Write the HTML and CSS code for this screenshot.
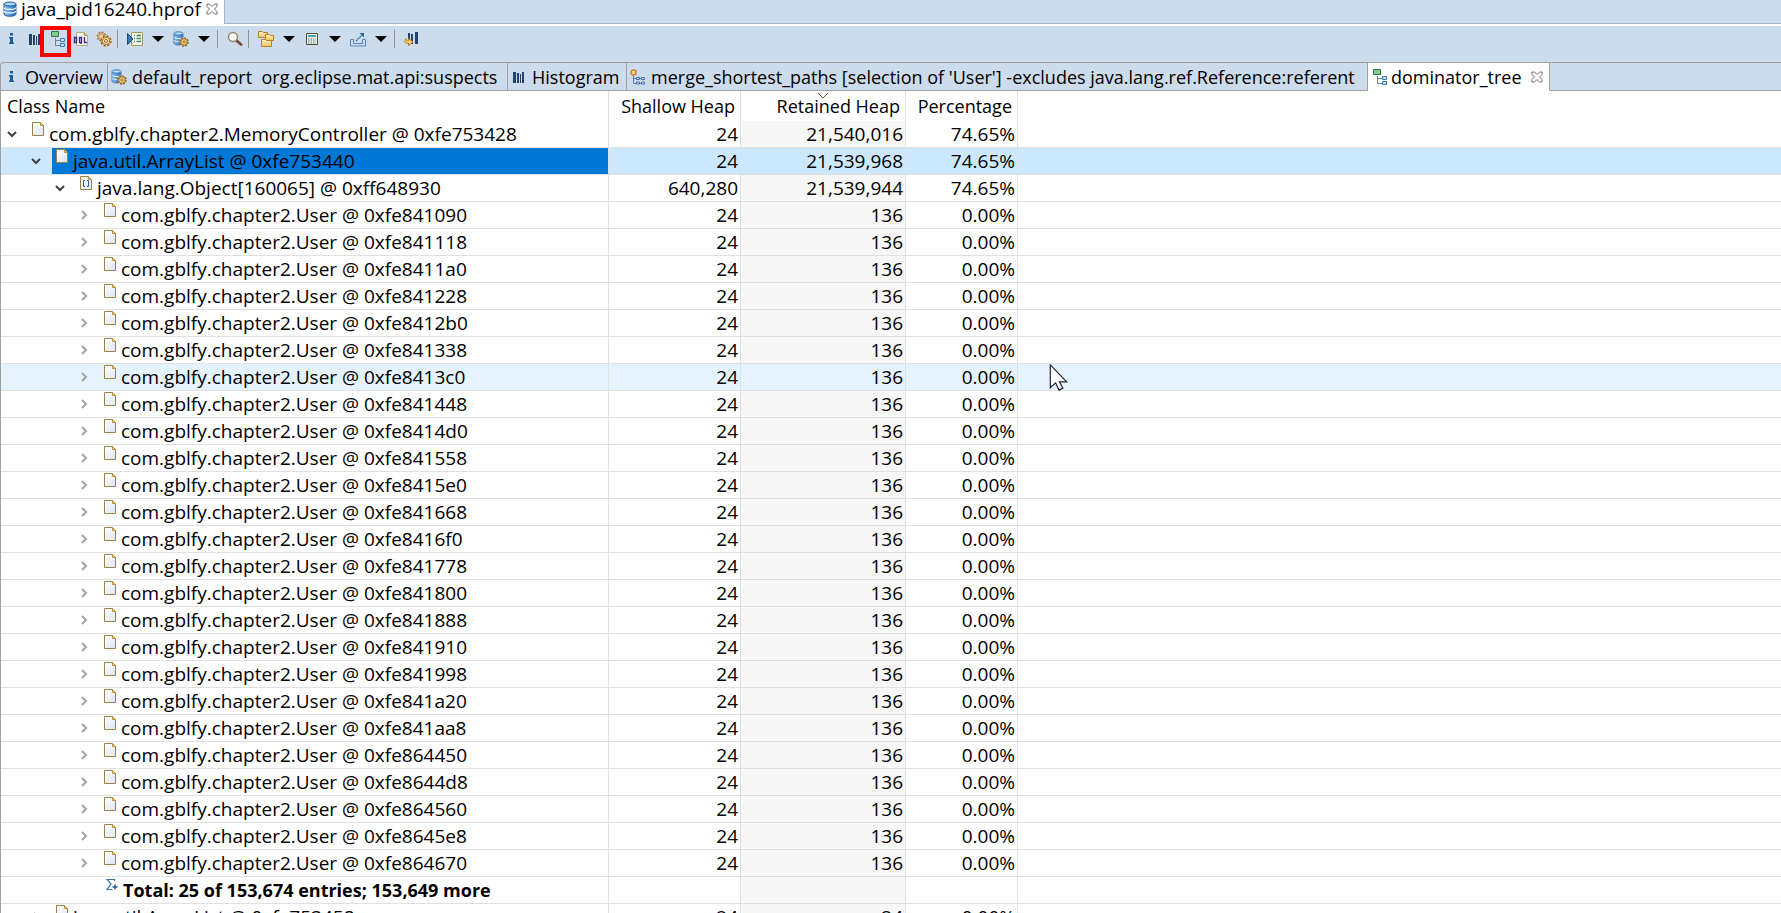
FILE: index.html
```html
<!DOCTYPE html>
<html lang="en">
<head>
<meta charset="utf-8">
<title>java_pid16240.hprof</title>
<link rel="stylesheet" href="styles.css">
</head>
<body>
<svg class="defs" aria-hidden="true">
  <defs>
    <linearGradient id="paper" x1="0" y1="0" x2="1" y2="1"><stop offset="0" stop-color="#fff"/><stop offset="1" stop-color="#dce6f5"/></linearGradient>
    <linearGradient id="cyl" x1="0" y1="0" x2="1" y2="0"><stop offset="0" stop-color="#8ec4f0"/><stop offset="1" stop-color="#2b6fb5"/></linearGradient>
    <linearGradient id="gold" x1="0" y1="0" x2="0" y2="1"><stop offset="0" stop-color="#fff3c4"/><stop offset="1" stop-color="#efc25c"/></linearGradient>
  </defs>
  <symbol id="i-info" viewBox="0 0 16 16"><path fill="#1c5f9e" d="M6 2h3v2.500H6zM5 6h4v5.500h1V13H5v-1.500h1v-4H5z"/></symbol>
  <symbol id="i-hist" viewBox="0 0 16 16"><path fill="#23406f" d="M2 3h3v11H2zM6 4h2v10H6zM9 5h1v9H9zM11 3h2v11h-2z"/></symbol>
  <symbol id="i-tree" viewBox="0 0 16 16"><path d="M5.500 7v7.500H10M5.500 9.500H10" fill="none" stroke="#6b7fa3"/><path d="M1.500.5h7v5h-7z" fill="#8cc98e" stroke="#237a3c"/><path d="M10.500 7.500h4v3h-4zM10.500 12.500h4v3h-4z" fill="#c4e2fa" stroke="#3b77b5"/></symbol>
  <symbol id="i-oql" viewBox="0 0 16 16"><path d="M3.500 1.500h8l3 3v10h-11z" fill="#f7f7f2" stroke="#b5ab86"/><path d="M11.500 1.500v3h3" fill="#e8c878" stroke="#b5944c"/><path d="M1.500 6.500h2v5h-2zM6.500 6.500h2v5h-2zM8 11v2M11.500 6v5.500H14" fill="none" stroke="#3d2f7a" stroke-width="1.400"/></symbol>
  <symbol id="i-gears" viewBox="0 0 16 16"><circle cx="5.500" cy="5.500" r="4.200" fill="#e9d0a8" stroke="#a8763a" stroke-width="1.500" stroke-dasharray="2 1.200"/><circle cx="5.500" cy="5.500" r="2.800" fill="none" stroke="#b98b52"/><circle cx="10" cy="10" r="4.900" fill="#f4d896" stroke="#946024" stroke-width="1.500" stroke-dasharray="2.300 1.500"/><circle cx="10" cy="10" r="3.600" fill="#fbe5a6" stroke="#a87430"/><circle cx="10" cy="10" r="1.500" fill="#fff" stroke="#946024"/></symbol>
  <symbol id="i-run" viewBox="0 0 16 16"><path d="M4.500 1.500h11v13h-11z" fill="#f5f9ee" stroke="#a39a5c"/><path d="M7 4.500h1M9.500 4.500H14M7 7.500h1M9.500 7.500H14M7 10.500h1M9.500 10.500H14" stroke="#3c8a68" stroke-width="1.300"/><path d="M.5 2.500 6 8l-5.500 5.500z" fill="#3878a8" stroke="#174d76"/></symbol>
  <symbol id="i-db" viewBox="0 0 16 16"><path d="M2 3v10c0 3 12 3 12 0V3z" fill="url(#cyl)" stroke="#1f5c9e"/><path d="M2 6.500c0 2.500 12 2.500 12 0M2 10c0 2.500 12 2.500 12 0" fill="none" stroke="#fff" stroke-width="1.200"/><ellipse cx="8" cy="3" rx="6" ry="2" fill="#a9d4f7" stroke="#1f5c9e"/></symbol>
  <symbol id="i-dbgear" viewBox="0 0 16 16"><path d="M1 3v9c0 2.500 9 2.500 9 0V3z" fill="url(#cyl)" stroke="#3a78b5"/><path d="M1 6c0 2 9 2 9 0M1 9c0 2 9 2 9 0" fill="none" stroke="#e8f4ff"/><ellipse cx="5.500" cy="2.500" rx="4.500" ry="1.700" fill="#b5daf8" stroke="#3a78b5"/><circle cx="11" cy="11" r="4" fill="#fbdf8a" stroke="#8d6220" stroke-width="1.600" stroke-dasharray="1.900 1.200"/><circle cx="11" cy="11" r="3.200" fill="#fbe49a" stroke="#9c702c"/><circle cx="11" cy="11" r="1.200" fill="#fff" stroke="#8d6220"/></symbol>
  <symbol id="i-search" viewBox="0 0 16 16"><path d="m9.500 9.500 4.500 4" stroke="#7c4b47" stroke-width="3" stroke-linecap="round"/><circle cx="6" cy="6" r="4.500" fill="#f7fbff" stroke="#8f8a68" stroke-width="1.500"/></symbol>
  <symbol id="i-folders" viewBox="0 0 16 16"><g fill="url(#gold)" stroke="#b98424"><path d="M.5.5h4l1 1h4v5h-9z"/><path d="M7.500 3.500h4l1 1h3v5h-8z"/><path d="M3.500 8.500h4l1 1h5v6h-10z"/></g></symbol>
  <symbol id="i-calc" viewBox="0 0 16 16"><path d="M2.500 2.500h11v11h-11z" fill="#f5f3df" stroke="#4a4d44"/><path d="M4 4h8v2H4z" fill="#4d9bbd"/><path d="M4 8h8M4 10h8M4 12h8" stroke="#3f7ea3" stroke-width="1.200" stroke-dasharray="1.500 1"/></symbol>
  <symbol id="i-export" viewBox="0 0 16 16"><path d="M.5 8.500h3v4h9v-4h3v6.500H.5z" fill="#c8dcf2" stroke="#6483b5"/><path d="m6 10 6.500-6.500" stroke="#2b67a3" stroke-width="1.200" stroke-dasharray="2 .5"/><path d="M9.500 2H14v4.500z" fill="#2b67a3"/></symbol>
  <symbol id="i-histgo" viewBox="0 0 16 16"><path fill="#23406f" d="M4 2h2v9H4zM7 3h2v10H7zM11 1h3v12h-3z"/><path d="M2 7.500c-2.500 3-1 5 2.500 4.500v2.500L9 11 4.500 7.500v2C3 10 2 9 2 7.500z" fill="#fbd66e" stroke="#ad761c"/></symbol>
  <symbol id="i-paths" viewBox="0 0 16 16"><path d="M3.500 6v8.500H7M3.500 9.500H7M10 9.500h2M10 14.500h2" fill="none" stroke="#5b7cb0"/><circle cx="3.500" cy="3.500" r="2.600" fill="#fbd08a" stroke="#c9771f" stroke-width="1.300"/><path d="M6.500 8.500h3v2h-3zM11.500 8.500h3v2h-3zM6.500 13h3v2h-3zM11.500 13h3v2h-3z" fill="#d6e4f8" stroke="#4b71ad"/></symbol>
  <symbol id="i-close" viewBox="0 0 12 12"><path d="M1 1h2.500L6 3.500 8.500 1H11v2.500L8.500 6 11 8.500V11H8.500L6 8.500 3.500 11H1V8.500L3.500 6 1 3.500z" fill="#fff" stroke="#6d6d6d"/></symbol>
  <symbol id="i-down" viewBox="0 0 12 6"><path d="M0 0h12L6 6z"/></symbol>
  <symbol id="i-file" viewBox="0 0 12 14"><path d="M.5.5h8l3 3v10H.5z" fill="url(#paper)" stroke="#9c8240"/><path d="M8.500.5v3h3z" fill="#f0d595" stroke="#b8923e"/></symbol>
  <symbol id="i-array" viewBox="0 0 12 14"><path d="M.5.5h8l3 3v10H.5z" fill="url(#paper)" stroke="#9c8240"/><path d="M8.500.5v3h3z" fill="#f0d595" stroke="#b8923e"/><path d="M5 4.500H3.500v6H5M7 4.500h1.500v6H7" fill="none" stroke="#2b5c94"/></symbol>
  <symbol id="i-sum" viewBox="0 0 12 14"><path d="M8.500 3V1.500H1L5 6 1 11.500h5.500" fill="none" stroke="#3d6fa3" stroke-width="1.200"/><path d="M9 6.500v5M6.500 9h5" stroke="#2f6196" stroke-width="1.500"/></symbol>
  <symbol id="i-open" viewBox="0 0 10 10"><path d="m1 3 4 4 4-4" fill="none" stroke="#404040" stroke-width="2"/></symbol>
  <symbol id="i-shut" viewBox="0 0 10 10"><path d="m3 1 4 4-4 4" fill="none" stroke="#a3a3a3" stroke-width="2"/></symbol>
</svg>

<header class="titlebar">
  <div class="file-tab"><svg class="ico"><use href="#i-db"/></svg><span>java_pid16240.hprof</span><button class="close" aria-label="Close file"><svg><use href="#i-close"/></svg></button></div>
</header>

<div class="toolbar" role="toolbar" aria-label="Heap dump tools">
  <button aria-label="Overview"><svg class="ico"><use href="#i-info"/></svg></button>
  <button aria-label="Histogram"><svg class="ico"><use href="#i-hist"/></svg></button>
  <button class="marked" aria-label="Dominator tree"><svg class="ico"><use href="#i-tree"/></svg></button>
  <button aria-label="Object query"><svg class="ico"><use href="#i-oql"/></svg></button>
  <button aria-label="Thread overview"><svg class="ico"><use href="#i-gears"/></svg></button>
  <i class="sep"></i>
  <button aria-label="Run report"><svg class="ico"><use href="#i-run"/></svg></button>
  <button aria-label="Report menu"><svg class="down"><use href="#i-down"/></svg></button>
  <button aria-label="Query browser"><svg class="ico"><use href="#i-dbgear"/></svg></button>
  <button aria-label="Query menu"><svg class="down"><use href="#i-down"/></svg></button>
  <i class="sep"></i>
  <button aria-label="Search"><svg class="ico"><use href="#i-search"/></svg></button>
  <i class="sep"></i>
  <button aria-label="Group"><svg class="ico"><use href="#i-folders"/></svg></button>
  <button aria-label="Group menu"><svg class="down"><use href="#i-down"/></svg></button>
  <button aria-label="Calculate"><svg class="ico"><use href="#i-calc"/></svg></button>
  <button aria-label="Calculate menu"><svg class="down"><use href="#i-down"/></svg></button>
  <button aria-label="Export"><svg class="ico"><use href="#i-export"/></svg></button>
  <button aria-label="Export menu"><svg class="down"><use href="#i-down"/></svg></button>
  <i class="sep"></i>
  <button aria-label="Compare"><svg class="ico"><use href="#i-histgo"/></svg></button>
</div>

<nav class="tabs" role="tablist">
  <button class="tab t-overview" role="tab"><svg class="ico"><use href="#i-info"/></svg><span>Overview</span></button>
  <button class="tab t-report" role="tab"><svg class="ico"><use href="#i-dbgear"/></svg><span>default_report&nbsp; org.eclipse.mat.api:suspects</span></button>
  <button class="tab t-hist" role="tab"><svg class="ico"><use href="#i-hist"/></svg><span>Histogram</span></button>
  <button class="tab t-paths" role="tab"><svg class="ico"><use href="#i-paths"/></svg><span>merge_shortest_paths [selection of 'User'] -excludes java.lang.ref.Reference:referent</span></button>
  <div class="tab active" role="tab" aria-selected="true"><svg class="ico"><use href="#i-tree"/></svg><span>dominator_tree</span><button class="close" aria-label="Close tab"><svg><use href="#i-close"/></svg></button></div>
</nav>

<main class="view">
<table class="heap">
<colgroup><col class="c-name"><col class="c-shallow"><col class="c-retained"><col class="c-percent"><col></colgroup>
<thead><tr><th>Class Name</th><th>Shallow Heap</th><th class="sorted">Retained Heap<svg class="sort" viewBox="0 0 12 6"><path d="m1 0 5 5 5-5" fill="none" stroke="#555"/></svg></th><th>Percentage</th><th></th></tr></thead>
<tbody>
<tr><td><div class="node l0"><button aria-label="Collapse"><svg><use href="#i-open"/></svg></button><span class="label"><svg><use href="#i-file"/></svg>com.gblfy.chapter2.MemoryController @ 0xfe753428</span></div></td><td>24</td><td>21,540,016</td><td>74.65%</td><td></td></tr>
<tr class="selected"><td><div class="node l1"><button aria-label="Collapse"><svg><use href="#i-open"/></svg></button><span class="label"><svg><use href="#i-file"/></svg>java.util.ArrayList @ 0xfe753440</span></div></td><td>24</td><td>21,539,968</td><td>74.65%</td><td></td></tr>
<tr><td><div class="node l2"><button aria-label="Collapse"><svg><use href="#i-open"/></svg></button><span class="label"><svg><use href="#i-array"/></svg>java.lang.Object[160065] @ 0xff648930</span></div></td><td>640,280</td><td>21,539,944</td><td>74.65%</td><td></td></tr>
<tr><td><div class="node l3"><button aria-label="Expand"><svg><use href="#i-shut"/></svg></button><span class="label"><svg><use href="#i-file"/></svg>com.gblfy.chapter2.User @ 0xfe841090</span></div></td><td>24</td><td>136</td><td>0.00%</td><td></td></tr>
<tr><td><div class="node l3"><button aria-label="Expand"><svg><use href="#i-shut"/></svg></button><span class="label"><svg><use href="#i-file"/></svg>com.gblfy.chapter2.User @ 0xfe841118</span></div></td><td>24</td><td>136</td><td>0.00%</td><td></td></tr>
<tr><td><div class="node l3"><button aria-label="Expand"><svg><use href="#i-shut"/></svg></button><span class="label"><svg><use href="#i-file"/></svg>com.gblfy.chapter2.User @ 0xfe8411a0</span></div></td><td>24</td><td>136</td><td>0.00%</td><td></td></tr>
<tr><td><div class="node l3"><button aria-label="Expand"><svg><use href="#i-shut"/></svg></button><span class="label"><svg><use href="#i-file"/></svg>com.gblfy.chapter2.User @ 0xfe841228</span></div></td><td>24</td><td>136</td><td>0.00%</td><td></td></tr>
<tr><td><div class="node l3"><button aria-label="Expand"><svg><use href="#i-shut"/></svg></button><span class="label"><svg><use href="#i-file"/></svg>com.gblfy.chapter2.User @ 0xfe8412b0</span></div></td><td>24</td><td>136</td><td>0.00%</td><td></td></tr>
<tr><td><div class="node l3"><button aria-label="Expand"><svg><use href="#i-shut"/></svg></button><span class="label"><svg><use href="#i-file"/></svg>com.gblfy.chapter2.User @ 0xfe841338</span></div></td><td>24</td><td>136</td><td>0.00%</td><td></td></tr>
<tr class="hovered"><td><div class="node l3"><button aria-label="Expand"><svg><use href="#i-shut"/></svg></button><span class="label"><svg><use href="#i-file"/></svg>com.gblfy.chapter2.User @ 0xfe8413c0</span></div></td><td>24</td><td>136</td><td>0.00%</td><td class="rest"><svg class="pointer" viewBox="0 0 20 30"><path d="M1 1v23.500l5.500-5L10 27l4-2-3.500-6.500H18z" fill="#fff" stroke="#1c1c2c" stroke-width="1.200"/></svg></td></tr>
<tr><td><div class="node l3"><button aria-label="Expand"><svg><use href="#i-shut"/></svg></button><span class="label"><svg><use href="#i-file"/></svg>com.gblfy.chapter2.User @ 0xfe841448</span></div></td><td>24</td><td>136</td><td>0.00%</td><td></td></tr>
<tr><td><div class="node l3"><button aria-label="Expand"><svg><use href="#i-shut"/></svg></button><span class="label"><svg><use href="#i-file"/></svg>com.gblfy.chapter2.User @ 0xfe8414d0</span></div></td><td>24</td><td>136</td><td>0.00%</td><td></td></tr>
<tr><td><div class="node l3"><button aria-label="Expand"><svg><use href="#i-shut"/></svg></button><span class="label"><svg><use href="#i-file"/></svg>com.gblfy.chapter2.User @ 0xfe841558</span></div></td><td>24</td><td>136</td><td>0.00%</td><td></td></tr>
<tr><td><div class="node l3"><button aria-label="Expand"><svg><use href="#i-shut"/></svg></button><span class="label"><svg><use href="#i-file"/></svg>com.gblfy.chapter2.User @ 0xfe8415e0</span></div></td><td>24</td><td>136</td><td>0.00%</td><td></td></tr>
<tr><td><div class="node l3"><button aria-label="Expand"><svg><use href="#i-shut"/></svg></button><span class="label"><svg><use href="#i-file"/></svg>com.gblfy.chapter2.User @ 0xfe841668</span></div></td><td>24</td><td>136</td><td>0.00%</td><td></td></tr>
<tr><td><div class="node l3"><button aria-label="Expand"><svg><use href="#i-shut"/></svg></button><span class="label"><svg><use href="#i-file"/></svg>com.gblfy.chapter2.User @ 0xfe8416f0</span></div></td><td>24</td><td>136</td><td>0.00%</td><td></td></tr>
<tr><td><div class="node l3"><button aria-label="Expand"><svg><use href="#i-shut"/></svg></button><span class="label"><svg><use href="#i-file"/></svg>com.gblfy.chapter2.User @ 0xfe841778</span></div></td><td>24</td><td>136</td><td>0.00%</td><td></td></tr>
<tr><td><div class="node l3"><button aria-label="Expand"><svg><use href="#i-shut"/></svg></button><span class="label"><svg><use href="#i-file"/></svg>com.gblfy.chapter2.User @ 0xfe841800</span></div></td><td>24</td><td>136</td><td>0.00%</td><td></td></tr>
<tr><td><div class="node l3"><button aria-label="Expand"><svg><use href="#i-shut"/></svg></button><span class="label"><svg><use href="#i-file"/></svg>com.gblfy.chapter2.User @ 0xfe841888</span></div></td><td>24</td><td>136</td><td>0.00%</td><td></td></tr>
<tr><td><div class="node l3"><button aria-label="Expand"><svg><use href="#i-shut"/></svg></button><span class="label"><svg><use href="#i-file"/></svg>com.gblfy.chapter2.User @ 0xfe841910</span></div></td><td>24</td><td>136</td><td>0.00%</td><td></td></tr>
<tr><td><div class="node l3"><button aria-label="Expand"><svg><use href="#i-shut"/></svg></button><span class="label"><svg><use href="#i-file"/></svg>com.gblfy.chapter2.User @ 0xfe841998</span></div></td><td>24</td><td>136</td><td>0.00%</td><td></td></tr>
<tr><td><div class="node l3"><button aria-label="Expand"><svg><use href="#i-shut"/></svg></button><span class="label"><svg><use href="#i-file"/></svg>com.gblfy.chapter2.User @ 0xfe841a20</span></div></td><td>24</td><td>136</td><td>0.00%</td><td></td></tr>
<tr><td><div class="node l3"><button aria-label="Expand"><svg><use href="#i-shut"/></svg></button><span class="label"><svg><use href="#i-file"/></svg>com.gblfy.chapter2.User @ 0xfe841aa8</span></div></td><td>24</td><td>136</td><td>0.00%</td><td></td></tr>
<tr><td><div class="node l3"><button aria-label="Expand"><svg><use href="#i-shut"/></svg></button><span class="label"><svg><use href="#i-file"/></svg>com.gblfy.chapter2.User @ 0xfe864450</span></div></td><td>24</td><td>136</td><td>0.00%</td><td></td></tr>
<tr><td><div class="node l3"><button aria-label="Expand"><svg><use href="#i-shut"/></svg></button><span class="label"><svg><use href="#i-file"/></svg>com.gblfy.chapter2.User @ 0xfe8644d8</span></div></td><td>24</td><td>136</td><td>0.00%</td><td></td></tr>
<tr><td><div class="node l3"><button aria-label="Expand"><svg><use href="#i-shut"/></svg></button><span class="label"><svg><use href="#i-file"/></svg>com.gblfy.chapter2.User @ 0xfe864560</span></div></td><td>24</td><td>136</td><td>0.00%</td><td></td></tr>
<tr><td><div class="node l3"><button aria-label="Expand"><svg><use href="#i-shut"/></svg></button><span class="label"><svg><use href="#i-file"/></svg>com.gblfy.chapter2.User @ 0xfe8645e8</span></div></td><td>24</td><td>136</td><td>0.00%</td><td></td></tr>
<tr><td><div class="node l3"><button aria-label="Expand"><svg><use href="#i-shut"/></svg></button><span class="label"><svg><use href="#i-file"/></svg>com.gblfy.chapter2.User @ 0xfe864670</span></div></td><td>24</td><td>136</td><td>0.00%</td><td></td></tr>
<tr class="total"><td><div class="node leaf"><span class="label"><svg><use href="#i-sum"/></svg>Total: 25 of 153,674 entries; 153,649 more</span></div></td><td></td><td></td><td></td><td></td></tr>
<tr><td><div class="node l1"><button aria-label="Expand"><svg><use href="#i-shut"/></svg></button><span class="label"><svg><use href="#i-file"/></svg>java.util.ArrayList @ 0xfe753458</span></div></td><td>24</td><td>24</td><td>0.00%</td><td></td></tr>
</tbody>
</table>
</main>
</body>
</html>
```

FILE: styles.css
```css
* { box-sizing: border-box; }

body {
  margin: 0;
  height: 100vh;
  overflow: hidden;
  display: flex;
  flex-direction: column;
  background: #cddcec;
  color: #000;
  font: 19px/26px "Open Sans", "Noto Sans", sans-serif;
}

button {
  margin: 0;
  padding: 0;
  border: 0;
  background: none;
  color: inherit;
  font: inherit;
}

svg { display: block; flex: none; }
.defs { position: absolute; width: 0; height: 0; }
.ico { width: 16px; height: 16px; }

.close { display: flex; }
.close svg { width: 12px; height: 12px; }

/* Editor title */
.titlebar {
  flex: none;
  display: flex;
  height: 26px;
  border-bottom: 2px solid #fff;
  line-height: 18px;
}
.titlebar::after {
  content: "";
  flex: 1;
  border-left: 1px solid #a9b4cc;
  border-bottom: 1px solid #a9b4cc;
}
.file-tab {
  display: flex;
  align-items: center;
  width: 224px;
  padding: 0 6px 6px 2px;
  gap: 3px;
  background: #fff;
}
.file-tab .close { margin-left: auto; }

/* Toolbar */
.toolbar {
  flex: none;
  display: flex;
  align-items: center;
  height: 36px;
  padding-bottom: 10px;
}
.toolbar button {
  display: flex;
  align-items: center;
  justify-content: center;
  width: 23px;
  height: 26px;
}
.toolbar .sep {
  width: 8px;
  height: 18px;
  background: linear-gradient(#8c929a, #8c929a) 2px 0 / 1px 100% no-repeat;
}
.toolbar .down { width: 12px; height: 6px; }
.marked { position: relative; }
.marked::after {
  content: "";
  position: absolute;
  inset: 0 -2px -5px -6px;
  border: 4px solid #f00;
}

/* View tabs */
.tabs {
  flex: none;
  display: flex;
  height: 29px;
  border-top: 1px solid #a0a0a0;
  border-left: 1px solid #a0a0a0;
  border-top-left-radius: 4px;
  font-size: 18px;
}
.tabs::after {
  content: "";
  flex: 1;
  border-bottom: 1px solid #a0a0a0;
}
.tab {
  flex: none;
  display: flex;
  align-items: center;
  gap: 5px;
  padding: 0 0 0 3px;
  border-right: 1px solid #a0a0a0;
  border-bottom: 1px solid #a0a0a0;
  white-space: nowrap;
}
.t-overview { width: 107px; }
.t-report { width: 400px; }
.t-hist { width: 119px; }
.t-paths { width: 741px; }
.tab.active {
  width: 182px;
  gap: 3px;
  padding: 0 6px 0 4px;
  border-bottom-color: #fff;
  background: #fff;
}
.tab.active .close { margin-left: auto; }

/* Tree table */
.view {
  flex: 1;
  min-height: 0;
  overflow: hidden;
  border-left: 1px solid #a0a0a0;
  background: #fff;
}
.heap {
  width: 100%;
  table-layout: fixed;
  border-collapse: separate;
  border-spacing: 0;
}
.c-name { width: 608px; }
.c-shallow { width: 132px; }
.c-retained { width: 165px; }
.c-percent { width: 112px; }

.heap th,
.heap td {
  padding: 0 2px 0 0;
  border-right: 1px solid #e0e0e0;
  text-align: right;
  white-space: nowrap;
}
.heap th {
  height: 30px;
  padding-right: 5px;
  font-size: 18px;
  font-weight: 400;
  line-height: 30px;
}
.heap td { height: 27px; border-bottom: 1px solid #e0e0e0; }
.heap th:first-child { padding-left: 6px; text-align: left; }
.heap td:first-child { padding: 0; text-align: left; }
.heap th:last-child,
.heap td:last-child { border-right: 0; }
.heap td:nth-child(3) { background: #f7f7f7; }
.sorted { position: relative; }
.sort { position: absolute; top: 2px; left: calc(50% - 6px); width: 12px; height: 6px; }

.heap .selected td { background: #cce8ff; }
.heap .hovered td { background: #e5f3ff; }
.selected .label { background: #0078d7; }
.total .label { font-size: 18px; font-weight: 700; }

.node { display: flex; height: 26px; }
.node button {
  display: flex;
  align-items: center;
  justify-content: center;
  width: 22px;
}
.node button svg { width: 10px; height: 10px; }
.l1 { padding-left: 24px; }
.l2 { padding-left: 48px; }
.l3 { padding-left: 72px; }
.leaf { padding-left: 96px; }
.node .label {
  flex: 1;
  display: flex;
  gap: 5px;
  margin-left: 5px;
  padding-left: 4px;
}
.label svg { width: 12px; height: 14px; margin-top: 1px; }

/* Mouse pointer over the hovered row */
.rest { position: relative; }
.pointer { position: absolute; top: 0; left: 31px; width: 20px; height: 29px; }
```
